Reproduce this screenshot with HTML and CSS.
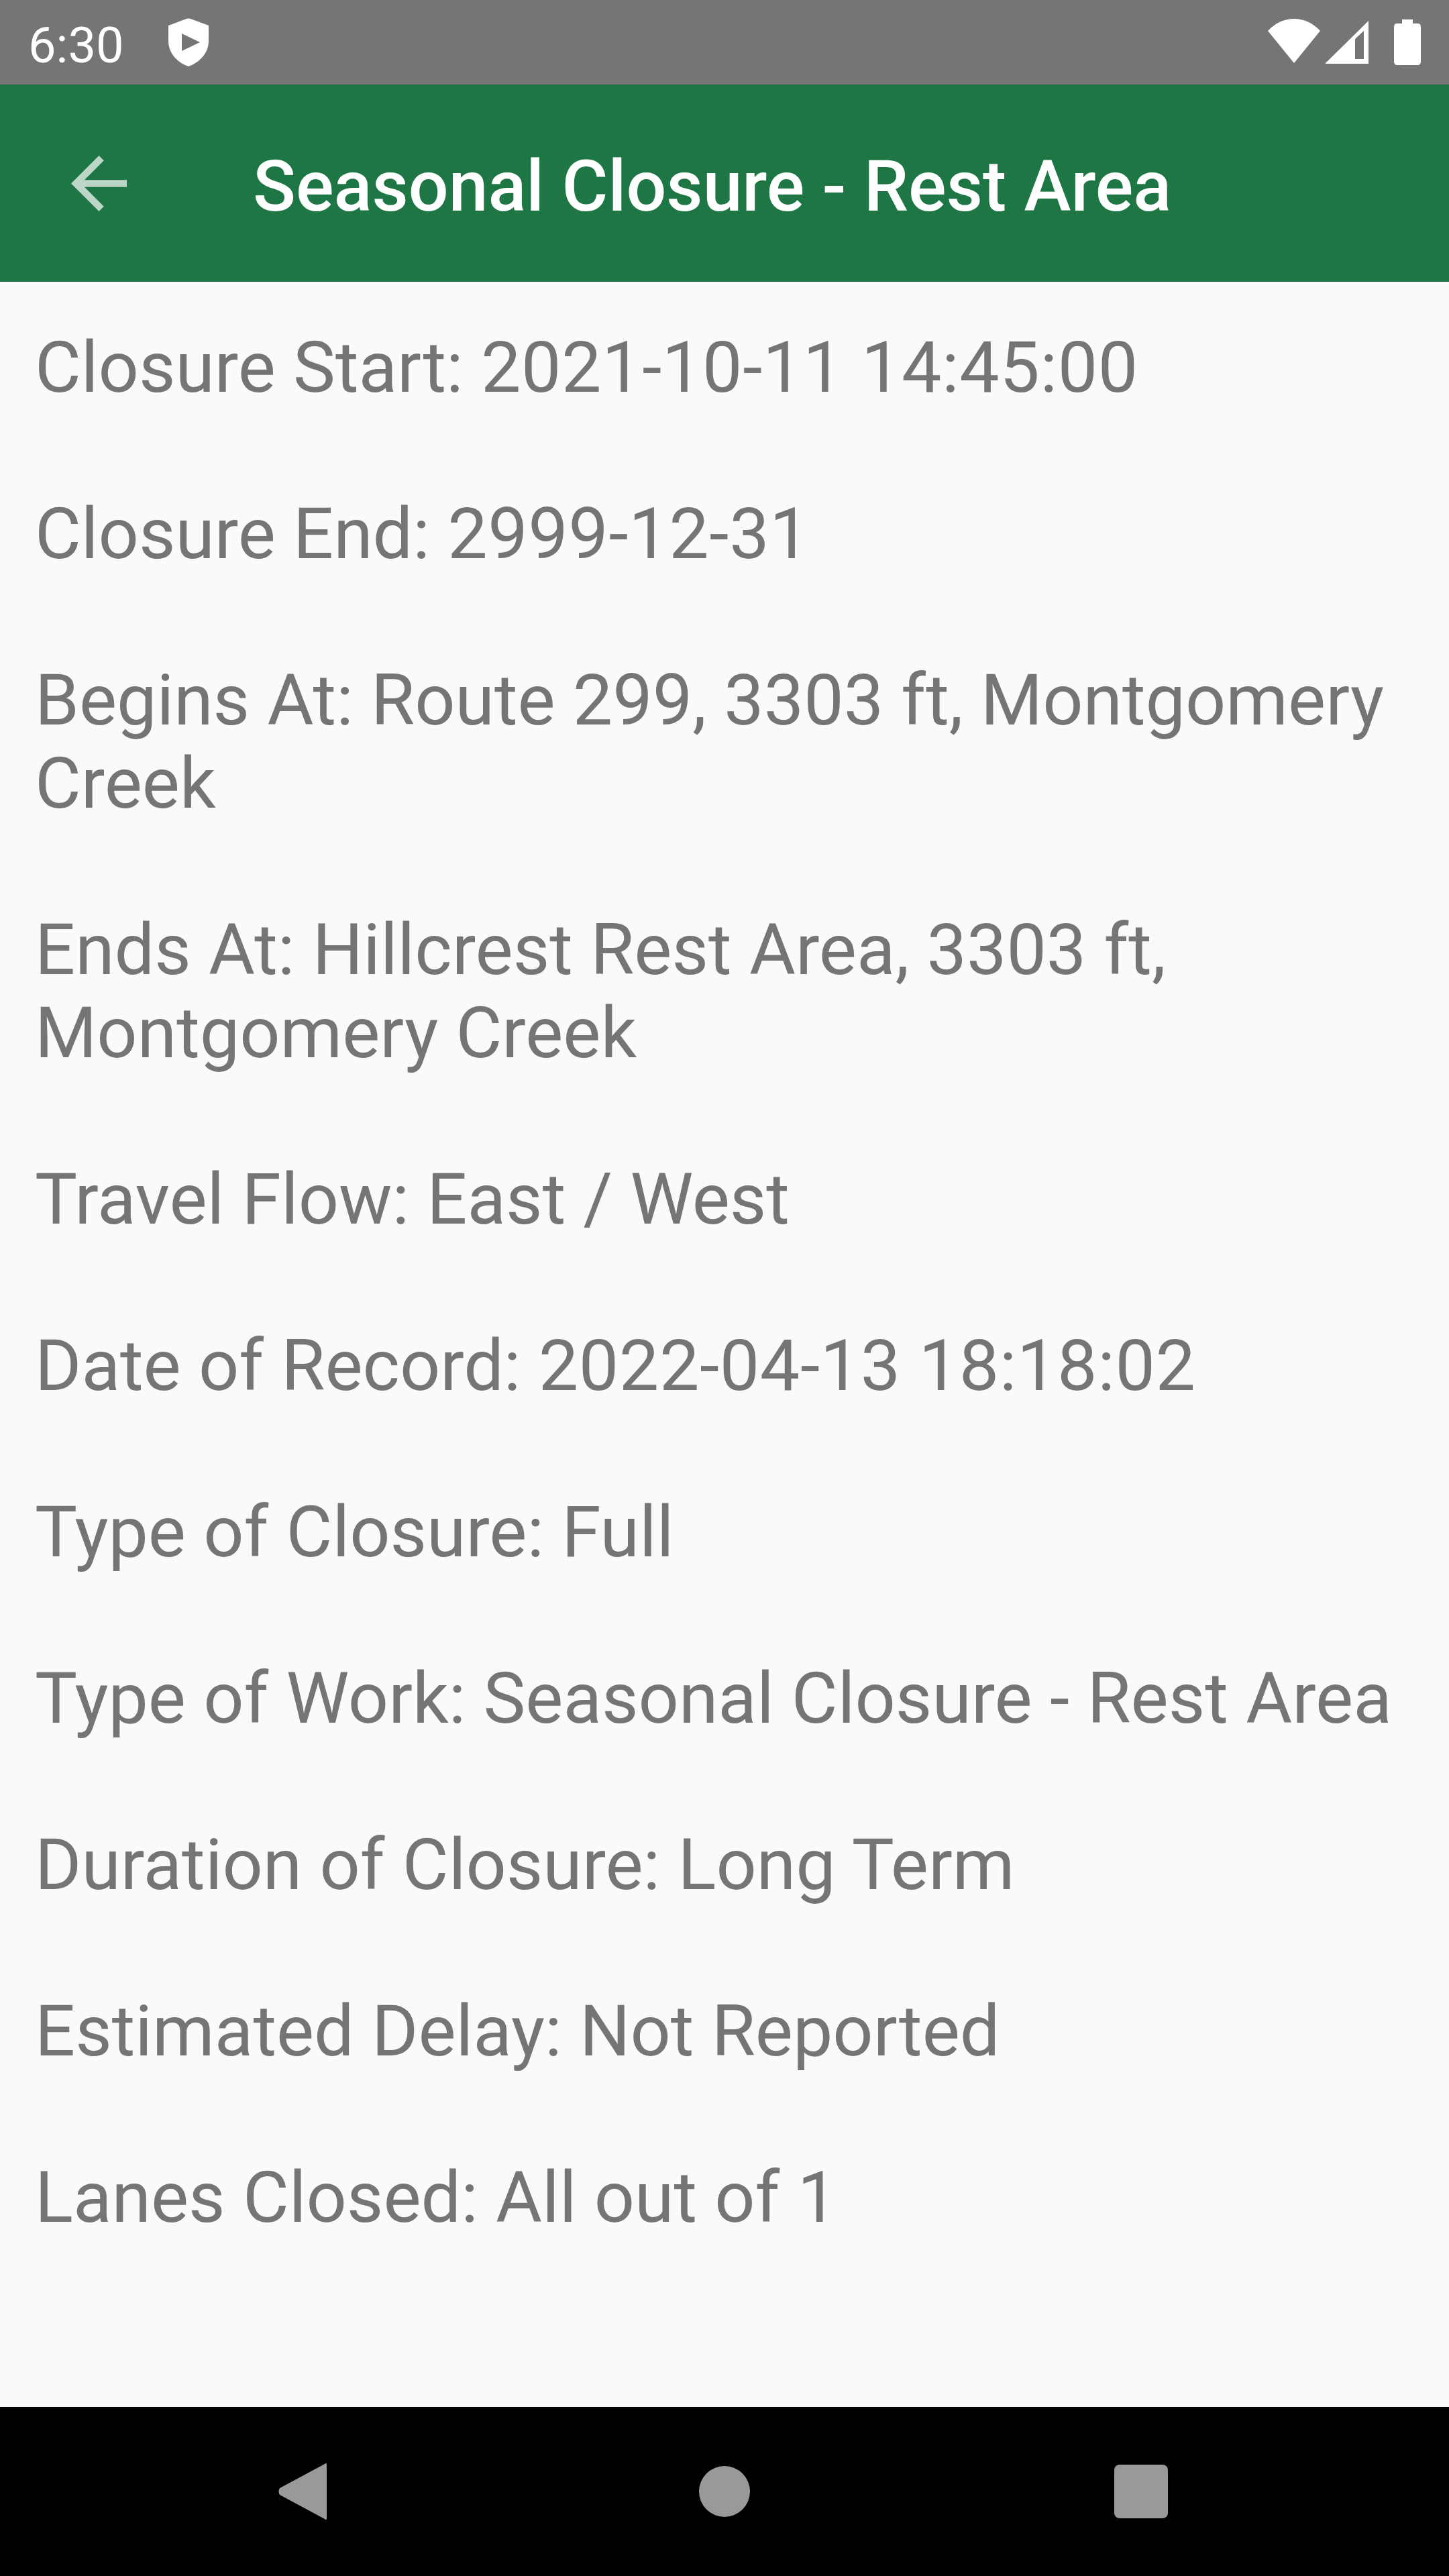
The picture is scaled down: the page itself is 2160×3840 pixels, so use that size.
FILE: index.html
```html
<!DOCTYPE html>
<html lang="en">
<head>
<meta charset="utf-8">
<title>Seasonal Closure - Rest Area</title>
<link rel="stylesheet" href="styles.css">
</head>
<body>
<div class="screen">
  <header class="status-bar">
    <div class="status-left">
      <span class="time">6:30</span>
      <svg class="shield" viewBox="0 0 60 72"><path fill-rule="evenodd" fill="#fff" d="M27 1Q30 0 33 1L60 11V34C60 52 47 66 30 72C13 66 0 52 0 34V11ZM20 23V49L47 36Z"/></svg>
    </div>
    <div class="status-right">
      <svg class="wifi" viewBox="0 0 78 66"><path fill="#fff" d="M0 18C22 -6 56 -6 78 18L39 66Z"/></svg>
      <svg class="signal" viewBox="0 0 66 64"><path fill-rule="evenodd" fill="#fff" d="M65 0V64H0ZM58 15L45 27V57H58Z"/></svg>
      <svg class="battery" viewBox="0 0 40 68"><path fill="#fff" d="M12 0H28V6H35Q40 6 40 11V63Q40 68 35 68H5Q0 68 0 63V11Q0 6 5 6H12Z"/></svg>
    </div>
  </header>
  <div class="app-bar">
    <svg class="back" viewBox="4 4 16 16"><path fill="#bcd6c7" d="M20 11H7.83l5.59-5.59L12 4l-8 8 8 8 1.41-1.41L7.83 13H20v-2z"/></svg>
    <h1 class="title">Seasonal Closure - Rest Area</h1>
  </div>
  <main class="details">
    <p class="row">Closure Start: <span class="num">2021-10-11 14:45:00</span></p>
    <p class="row">Closure End: <span class="num">2999-12-31</span></p>
    <p class="row">Begins At: Route 299, 3303 ft, Montgomery Creek</p>
    <p class="row">Ends At: Hillcrest Rest Area, 3303 ft, Montgomery Creek</p>
    <p class="row">Travel Flow: East / West</p>
    <p class="row">Date of Record: <span class="num">2022-04-13 18:18:02</span></p>
    <p class="row">Type of Closure: Full</p>
    <p class="row">Type of Work: Seasonal Closure - Rest Area</p>
    <p class="row">Duration of Closure: Long Term</p>
    <p class="row">Estimated Delay: Not Reported</p>
    <p class="row">Lanes Closed: All out of 1</p>
  </main>
  <nav class="nav-bar">
    <svg class="nav-back" viewBox="0 0 73 84"><path fill="#999" d="M70 1Q73 -2 73 3V81Q73 86 70 83L3 47Q0 42 3 37Z"/></svg>
    <span class="nav-home"></span>
    <span class="nav-recent"></span>
  </nav>
</div>
</body>
</html>
```

FILE: styles.css
```css
* { box-sizing: border-box; }
html, body { margin: 0; padding: 0; }
.screen {
  width: 2160px;
  height: 3840px;
  display: flex;
  flex-direction: column;
  background: #fafafa;
  font-family: Roboto, "Liberation Sans", sans-serif;
}
.status-bar {
  height: 126px;
  flex: none;
  background: #757575;
  display: flex;
  justify-content: space-between;
  align-items: center;
  padding: 0 42px 0 42px;
}
.status-left { display: flex; align-items: center; gap: 66px; }
.time { color: #fff; font-size: 74px; line-height: 82px; padding-top: 10px; }
.shield { width: 60px; height: 72px; display: block; }
.status-right { display: flex; align-items: center; }
.wifi { width: 78px; height: 66px; display: block; margin: 0 7px 5px 0; }
.signal { width: 66px; height: 64px; display: block; margin: 0 37px 1px 0; }
.battery { width: 40px; height: 68px; display: block; }
.app-bar {
  height: 294px;
  flex: none;
  background: #1e7645;
  display: flex;
  align-items: center;
  padding-left: 106px;
}
.back { width: 83px; height: 83px; display: block; margin-right: 188px; }
.title {
  margin: 0;
  padding-top: 10px;
  color: #fff;
  font-size: 105.6px;
  font-weight: 500;
  line-height: 124px;
}
.details {
  flex: 1;
  padding: 66px 40px 0 52px;
  display: flex;
  flex-direction: column;
  gap: 124px;
}
.row {
  margin: 0;
  color: #757575;
  font-size: 105.8px;
  line-height: 124px;
}
.num { letter-spacing: 0.6px; }
.nav-bar {
  height: 252px;
  flex: none;
  background: #000;
  display: flex;
  align-items: center;
  padding-left: 414px;
}
.nav-back { width: 73px; height: 84px; display: block; }
.nav-home { width: 76px; height: 76px; margin-left: 555px; border-radius: 50%; background: #999; }
.nav-recent { width: 80px; height: 80px; margin-left: 543px; border-radius: 8px; background: #999; }
```
